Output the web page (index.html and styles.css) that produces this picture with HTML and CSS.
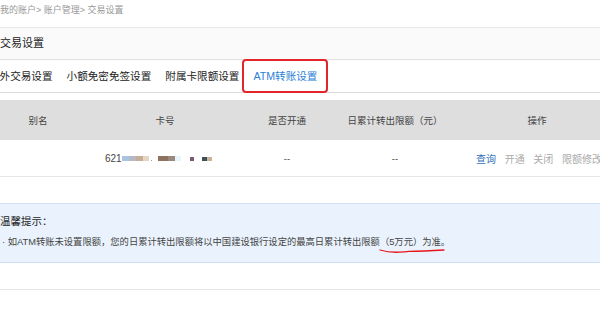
FILE: index.html
```html
<!DOCTYPE html>
<html lang="zh-CN">
  <head>
    <meta charset="UTF-8" />
    <title>交易设置</title>
    <link rel="stylesheet" href="styles.css">
  </head>
  <body>
    <div class="page">
      <div class="crumbs">我的账户&gt; 账户管理&gt; 交易设置</div>

      <div class="title-bar">交易设置</div>

      <div class="tabs">
        <span class="tab first">境外交易设置</span>
        <span class="tab">小额免密免签设置</span>
        <span class="tab">附属卡限额设置</span>
        <span class="tab active">ATM转账设置</span>
      </div>

      <table class="cards">
        <thead>
          <tr>
            <th class="c-alias">别名</th>
            <th class="c-no">卡号</th>
            <th class="c-open">是否开通</th>
            <th class="c-limit">日累计转出限额（元）</th>
            <th class="c-ops">操作</th>
          </tr>
        </thead>
        <tbody>
          <tr>
            <td></td>
            <td class="card-no">
              621<span class="mask"><i class="m1"></i><i class="m2"></i><i class="m3"></i><i class="m4"></i><i class="dot"></i><i class="m5"></i><i class="m6"></i><i class="m6b"></i><i class="m7"></i><i class="m8"></i><i class="m9"></i></span>
            </td>
            <td class="center">--</td>
            <td class="center">--</td>
            <td class="ops">
              <a class="link">查询</a>
              <a>开通</a>
              <a>关闭</a>
              <a>限额修改</a>
            </td>
          </tr>
        </tbody>
      </table>

      <!-- tip box -->
      <div class="tip">
        <div class="tip-title">温馨提示：</div>
        <p class="tip-text">· 如ATM转账未设置限额，您的日累计转出限额将以中国建设银行设定的最高日累计转出限额（5万元）为准。</p>
        <svg class="scribble" width="66" height="6" viewBox="0 0 66 6">
          <path d="M1 2 Q 9 4.5 20 4.2 Q 26 4 30 3.4 Q 44 3.2 65 2" fill="none" stroke="#e8151b" stroke-width="1.3" stroke-linecap="round"/>
        </svg>
      </div>

      <div class="bottom-line"></div>
    </div>
  </body>
</html>
```

FILE: styles.css
```css
/* Reset */
body,
p,
table {
  margin: 0;
  padding: 0;
}

body {
  font-family: "Liberation Sans", "Noto Sans CJK SC", sans-serif;
  color: #333;
  background: #fff;
}

.page {
  width: 600px;
  overflow: hidden;
}

/* Breadcrumb */
.crumbs {
  height: 27px;
  line-height: 20px;
  font-size: 9px;
  color: #999;
  border-bottom: 1px solid #e8e8e8;
}

/* Title band */
.title-bar {
  height: 31px;
  line-height: 31px;
  font-size: 11px;
  color: #222;
  background-color: #fafafa;
  border-bottom: 1px solid #e0e0e0;
}

/* Tabs */
.tabs {
  display: flex;
  align-items: center;
  gap: 14px;
  height: 32px;
  border-bottom: 1px solid #dcdcdc;
  font-size: 10.6px;
  color: #222;
}

.tab {
  line-height: 32px;
  white-space: nowrap;
}

.tab.first {
  margin-left: -11px;
}

.tab.active {
  box-sizing: border-box;
  height: 34px;
  margin: 0 0 0 -11px;
  padding: 0 9px;
  line-height: 30px;
  color: #2b7fd6;
  border: 2px solid #e3262c;
  border-radius: 4px;
}

/* Card table */
.cards {
  width: 604px;
  margin-top: 7px;
  border-collapse: collapse;
  table-layout: fixed;
  font-size: 9.5px;
  color: #444;
}

.cards th {
  height: 40px;
  padding: 0;
  font-weight: normal;
  background-color: #dedede;
  text-align: center;
}

.c-alias { width: 76px; }
.c-no { width: 178px; }
.c-open { width: 66px; }
.c-limit { width: 150px; }

.cards td {
  height: 36px;
  padding: 0;
  border-bottom: 1px solid #e6e6e6;
}

.cards td.center {
  text-align: center;
}

.card-no {
  padding-left: 29px !important;
  font-size: 10px;
  white-space: nowrap;
}

.mask {
  display: inline-flex;
  align-items: center;
  vertical-align: middle;
}

.mask i {
  display: inline-block;
  height: 5px;
}

.mask .m1 { width: 7px; background: #a9c4de; }
.mask .m2 { width: 7px; background: #b5b9c4; }
.mask .m3 { width: 7px; background: #c6ad98; }
.mask .m4 { width: 6px; background: #e5d6c4; }
.mask .dot { width: 1px; height: 1px; margin: 4px 6px 0 2px; background: #999; }
.mask .m5 { width: 10px; background: #8d735f; }
.mask .m6 { width: 7px; background: #9a8a7e; }
.mask .m6b { width: 6px; background: #e6f4fc; }
.mask .m7 { width: 4px; height: 4px; margin-left: 9px; background: #7b5a74; }
.mask .m8 { width: 5px; height: 4px; margin-left: 8px; background: #3e4f59; }
.mask .m9 { width: 5px; height: 4px; background: #c9b49a; }

.ops {
  padding-left: 6px !important;
  white-space: nowrap;
}

.ops a {
  margin-right: 6px;
  font-size: 10px;
  color: #aaa;
}

.ops a.link {
  color: #2f6fba;
}

/* Tip box */
.tip {
  position: relative;
  margin-top: 26px;
  padding: 9px 0 12px;
  background-color: #eaf3fd;
  border-top: 1px solid #cfe1f5;
  border-bottom: 1px solid #cfe1f5;
  font-size: 9.3px;
  color: #444;
}

.tip-title {
  line-height: 16px;
  font-size: 10.5px;
  color: #222;
}

.tip-text {
  margin-top: 5px;
  padding-left: 2px;
  line-height: 16px;
  white-space: nowrap;
}

/* red hand-drawn mark */
.scribble {
  position: absolute;
  left: 379px;
  top: 44px;
}

.bottom-line {
  margin-top: 26px;
  border-top: 1px solid #e6e6e6;
}
```
